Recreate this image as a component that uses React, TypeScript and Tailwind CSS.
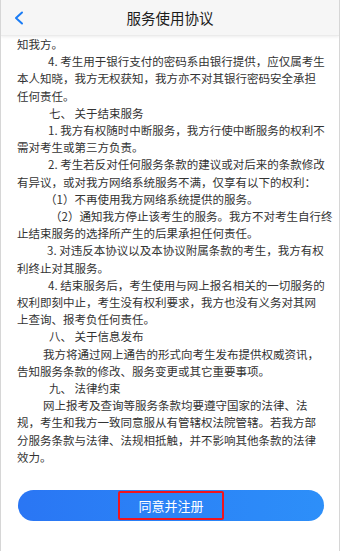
import React from "react";

type Para = { indent: string; lines: string[] };

const paras: Para[] = [
  { indent: "indent-0", lines: ["知我方。"] },
  {
    indent: "indent-[31px]",
    lines: [
      "4. 考生用于银行支付的密码系由银行提供，应仅属考生",
      "本人知晓，我方无权获知，我方亦不对其银行密码安全承担",
      "任何责任。",
    ],
  },
  { indent: "indent-[32px]", lines: ["七、 关于结束服务"] },
  {
    indent: "indent-[31px]",
    lines: ["1. 我方有权随时中断服务，我方行使中断服务的权利不", "需对考生或第三方负责。"],
  },
  {
    indent: "indent-[31px]",
    lines: ["2. 考生若反对任何服务条款的建议或对后来的条款修改", "有异议，或对我方网络系统服务不满，仅享有以下的权利："],
  },
  { indent: "indent-[28px]", lines: ["（1）不再使用我方网络系统提供的服务。"] },
  {
    indent: "indent-[33px]",
    lines: ["（2）通知我方停止该考生的服务。我方不对考生自行终", "止结束服务的选择所产生的后果承担任何责任。"],
  },
  {
    indent: "indent-[30px]",
    lines: ["3. 对违反本协议以及本协议附属条款的考生，我方有权", "利终止对其服务。"],
  },
  {
    indent: "indent-[31px]",
    lines: [
      "4. 结束服务后，考生使用与网上报名相关的一切服务的",
      "权利即刻中止，考生没有权利要求，我方也没有义务对其网",
      "上查询、报考负任何责任。",
    ],
  },
  { indent: "indent-[32px]", lines: ["八、 关于信息发布"] },
  {
    indent: "indent-[26px]",
    lines: ["我方将通过网上通告的形式向考生发布提供权威资讯，", "告知服务条款的修改、服务变更或其它重要事项。"],
  },
  { indent: "indent-[32px]", lines: ["九、 法律约束"] },
  {
    indent: "indent-[26px]",
    lines: [
      "网上报考及查询等服务条款均要遵守国家的法律、法",
      "规，考生和我方一致同意服从有管辖权法院管辖。若我方部",
      "分服务条款与法律、法规相抵触，并不影响其他条款的法律",
      "效力。",
    ],
  },
];

export default function App() {
  return (
    <div
      className="w-[340px] h-[551px] overflow-hidden bg-white border-x border-[#d6d6d6] flex flex-col"
      style={{ fontFamily: '"Noto Sans CJK SC", "Noto Sans", sans-serif' }}
    >
      <header className="h-[36px] shrink-0 bg-[#f6f6f6] shadow-[0_1px_3px_rgba(0,0,0,0.08)] border-b border-[#ebebeb] flex items-center relative z-10">
        <svg className="ml-[13px]" width="10" height="14" viewBox="0 0 10 14" fill="none">
          <polyline points="8,1.5 2,7 8,12.5" stroke="#1a7cf5" strokeWidth="2" strokeLinecap="round" strokeLinejoin="round" />
        </svg>
        <h1 className="flex-1 text-center text-[14.5px] text-[#1c1c1c] pr-[23px]">服务使用协议</h1>
      </header>

      <main className="flex-1 px-[16px] text-[11.5px] leading-[17.2px] text-[#333]">
        {paras.map((p, i) => (
          <p key={i} className={`${p.indent} whitespace-nowrap`}>
            {p.lines.map((l, j) => (
              <React.Fragment key={j}>
                {j > 0 && <br />}
                {l}
              </React.Fragment>
            ))}
          </p>
        ))}

        <button className="mt-[24px] ml-px w-[306px] h-[31px] rounded-full bg-gradient-to-r from-[#2a76f4] to-[#2d8ff9] flex items-center justify-center">
          <span className="w-[106px] h-[29px] border-2 border-[#f0141e] rounded-[2px] flex items-center justify-center text-white text-[13px]">
            同意并注册
          </span>
        </button>
      </main>
    </div>
  );
}
